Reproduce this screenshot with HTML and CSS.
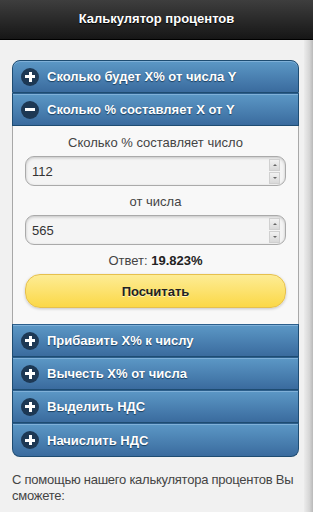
FILE: index.html
```html
<!DOCTYPE html>
<html lang="ru">
<head>
    <meta charset="UTF-8">
    <meta name="viewport" content="width=device-width, initial-scale=1.0">
    <title>Калькулятор процентов</title>
    <link rel="stylesheet" href="styles.css">
</head>
<body>
    <div class="header">Калькулятор процентов</div>
    <div class="page">
        <div class="accordion">
            <div class="row first"><span class="icon plus"></span>Сколько будет X% от числа Y</div>
            <div class="row open"><span class="icon minus"></span>Сколько % составляет X от Y</div>
            <div class="content">
                <div class="label">Сколько % составляет число</div>
                <div class="field">
                    <input type="text" value="112">
                    <div class="spin"><span class="up"></span><span class="down"></span></div>
                </div>
                <div class="label">от числа</div>
                <div class="field">
                    <input type="text" value="565">
                    <div class="spin"><span class="up"></span><span class="down"></span></div>
                </div>
                <div class="answer">Ответ: <b>19.823%</b></div>
                <button class="calc">Посчитать</button>
            </div>
            <div class="row"><span class="icon plus"></span>Прибавить X% к числу</div>
            <div class="row"><span class="icon plus"></span>Вычесть X% от числа</div>
            <div class="row"><span class="icon plus"></span>Выделить НДС</div>
            <div class="row last"><span class="icon plus"></span>Начислить НДС</div>
        </div>
        <p class="intro">С помощью нашего калькулятора процентов Вы сможете:</p>
    </div>
    <div class="edge"></div>
</body>
</html>
```

FILE: styles.css
```css
body {
    margin: 0;
    background: #f1f1f1;
    font-family: "Liberation Sans", Arial, sans-serif;
    color: #333;
    overflow: hidden;
}
.header {
    height: 40px;
    line-height: 38px;
    text-align: center;
    font-size: 13px;
    font-weight: bold;
    color: #fff;
    text-shadow: 0 1px 1px #000;
    background: linear-gradient(#3e3e3e, #161616);
    border-bottom: 1px solid #000;
    box-sizing: border-box;
}
.page {
    padding: 20px 14px 0 12px;
}
.accordion {
    display: flex;
    flex-direction: column;
}
.row {
    display: flex;
    align-items: center;
    height: 33px;
    box-sizing: border-box;
    padding-left: 8px;
    font-size: 13px;
    font-weight: bold;
    color: #fff;
    text-shadow: 0 1px 1px #1a3e5e;
    background: linear-gradient(#5c98c6, #3a6b9e);
    border: 1px solid #1e4c72;
    border-top-color: #2c5f8c;
    box-shadow: inset 0 1px 0 #7fb0d8;
}
.first {
    border-radius: 8px 8px 0 0;
    border-top-color: #1e4c72;
}
.last {
    border-radius: 0 0 8px 8px;
    height: 34px;
}
.icon {
    position: relative;
    width: 18px;
    height: 18px;
    border-radius: 50%;
    background: #1d3854;
    margin-right: 8px;
    flex-shrink: 0;
}
.icon::before,
.icon::after {
    content: "";
    position: absolute;
    background: #fff;
    left: 4px;
    top: 7.5px;
    width: 10px;
    height: 3px;
}
.plus::after {
    left: 7.5px;
    top: 4px;
    width: 3px;
    height: 10px;
}
.minus::after {
    display: none;
}
.content {
    display: flex;
    flex-direction: column;
    align-items: stretch;
    background: #f8f8f8;
    border-left: 1px solid #a8a8a8;
    border-right: 1px solid #a8a8a8;
    padding: 6px 12px 16px;
}
.label {
    text-align: center;
    font-size: 13px;
    line-height: 15px;
    color: #444;
    padding: 3px 0 6px;
}
.answer {
    text-align: center;
    font-size: 13px;
    line-height: 15px;
    color: #444;
    padding: 3px 0 6px;
}
.answer b {
    color: #222;
}
.field {
    display: flex;
    align-items: center;
    height: 30px;
    margin-bottom: 5px;
    border: 1px solid #aaa;
    border-radius: 9px;
    background: #f4f4f4;
    box-shadow: inset 0 1px 3px rgba(0, 0, 0, 0.2);
    box-sizing: border-box;
}
.field input {
    flex: 1;
    min-width: 0;
    border: none;
    background: transparent;
    font-family: "Liberation Sans", Arial, sans-serif;
    font-size: 13px;
    color: #333;
    padding: 0 6px;
    outline: none;
}
.spin {
    display: flex;
    flex-direction: column;
    gap: 1px;
    margin-right: 5px;
}
.spin span {
    position: relative;
    width: 11px;
    height: 12px;
    background: linear-gradient(#f2f2f2, #d9d9d9);
    border: 1px solid #d0d0d0;
    box-sizing: border-box;
}
.spin span::after {
    content: "";
    position: absolute;
    left: 3px;
    border-left: 2px solid transparent;
    border-right: 2px solid transparent;
}
.up::after {
    top: 4px;
    border-bottom: 2px solid #666;
}
.down::after {
    top: 4px;
    border-top: 2px solid #666;
}
.calc {
    height: 34px;
    border: 1px solid #e6c04d;
    border-radius: 15px;
    background: linear-gradient(#fdec95, #fbd847);
    box-shadow: 0 1px 3px rgba(0, 0, 0, 0.2);
    font-family: "Liberation Sans", Arial, sans-serif;
    font-size: 13px;
    font-weight: bold;
    color: #222;
    text-shadow: 0 1px 0 #fff5c4;
    cursor: pointer;
}
.intro {
    margin: 15px 0 0;
    font-size: 13px;
    line-height: 16px;
    letter-spacing: -0.25px;
    color: #444;
}
.edge {
    position: fixed;
    top: 40px;
    right: 0;
    bottom: 0;
    width: 9px;
    background: linear-gradient(90deg, #ececec, #d6d6d6 60%, #b9b9b9);
}
```
